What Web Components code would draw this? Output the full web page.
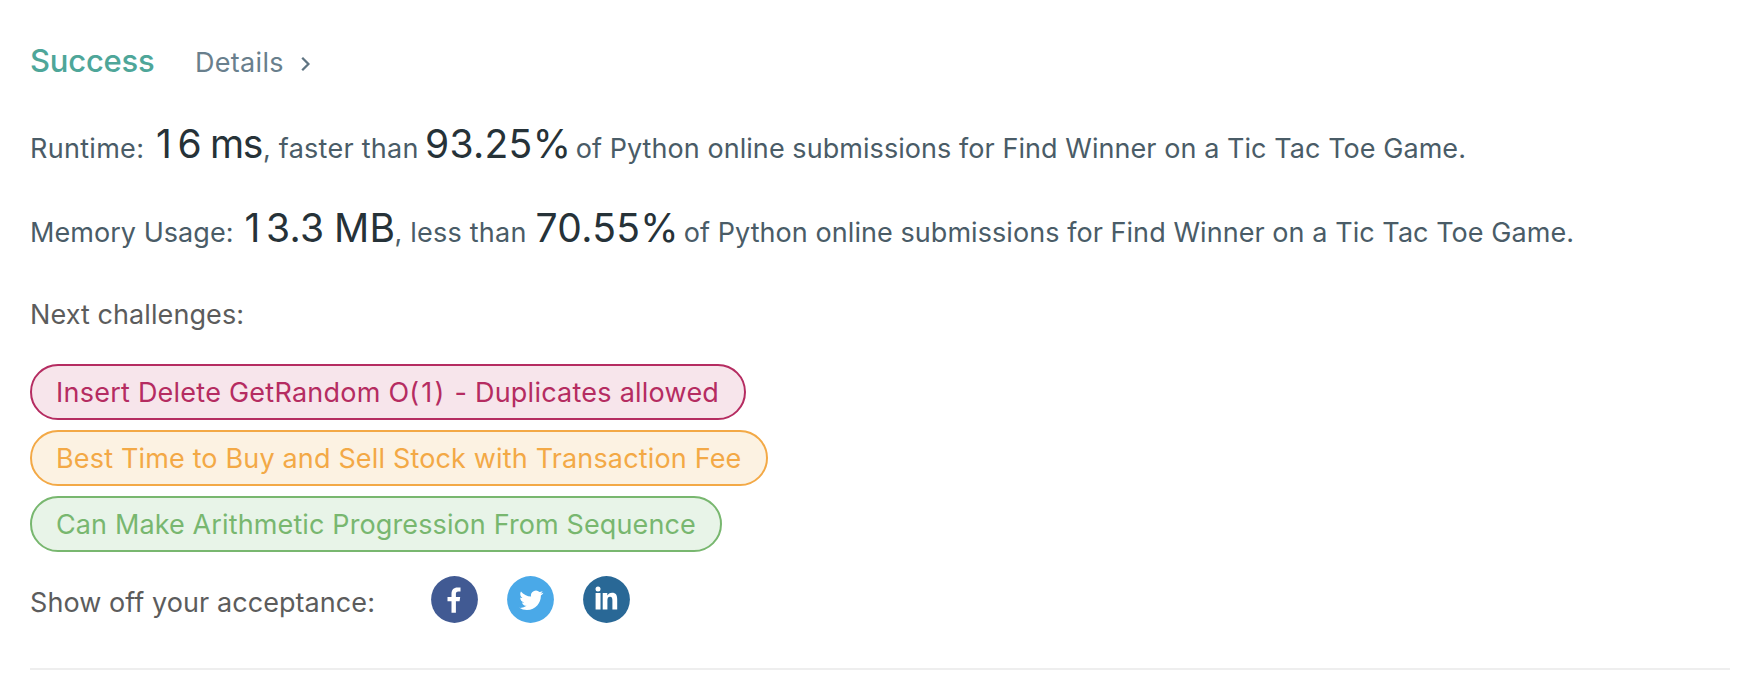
<!DOCTYPE html>
<html lang="en">
<head>
<meta charset="utf-8">
<title>Submission result</title>
<style>
body { margin: 0; background: #fff; font-family: Inter, "Liberation Sans", sans-serif; font-size: 27px; color: #455a64; }
</style>
</head>
<body>
<submission-result></submission-result>
<script>
const define = (name, html) => customElements.define(name, class extends HTMLElement {
  constructor() {
    super();
    const t = document.createElement('template');
    t.innerHTML = html;
    this.attachShadow({ mode: 'open' }).append(t.content.cloneNode(true));
  }
});

define('result-header', `
<style>
  :host { display: flex; align-items: baseline; height: 40px; line-height: 40px; }
  .status { width: 165px; font-size: 31px; font-weight: 500; letter-spacing: -.22px; color: #4ea699; }
  .details { display: flex; align-items: center; color: #697f8d; letter-spacing: .3px; }
  .details span { width: 105px; }
  svg { display: block; position: relative; top: 1px; }
</style>
<div class="status"><slot></slot></div>
<div class="details"><span>Details</span>
<svg width="12" height="18" viewBox="0 0 12 18" fill="none" stroke="#5f7482" stroke-width="2.3"><path d="M2.2 2.8 8.4 9 2.2 15.2"/></svg></div>`);

define('result-stat', `
<style>
  :host { display: flex; align-items: baseline; height: 50px; line-height: 50px; color: #4a5c67; }
</style>
<slot></slot>`);

define('stat-text', `
<style>:host { display: block; flex: none; width: var(--w, auto); white-space: nowrap; letter-spacing: var(--ls, 0); }</style><slot></slot>`);

define('stat-value', `
<style>:host { display: block; flex: none; width: var(--w, auto); white-space: nowrap; font-size: 39px; color: #263238; letter-spacing: var(--ls, 0); word-spacing: var(--ws, 0); }
::slotted(i) { font-style: normal; letter-spacing: 5.5px; }</style><slot></slot>`);

define('challenge-pill', `
<style>
  :host { display: block; box-sizing: border-box; height: 56px; border: 2px solid currentColor; border-radius: 28px; padding: 1px 0 0 24px; line-height: 52px; white-space: nowrap; }
  :host([level=hard]) { width: 716px; color: #b52c61; background: #f7e5eb; letter-spacing: .24px; }
  :host([level=medium]) { width: 738px; color: #f3a946; background: #fcf2e2; letter-spacing: .16px; }
  :host([level=easy]) { width: 692px; color: #78b76f; background: #e8f4e8; letter-spacing: .12px; }
  ::slotted(i) { font-style: normal; letter-spacing: 2.2px; }
</style><slot></slot>`);

define('share-row', `
<style>
  :host { display: flex; align-items: center; height: 56px; color: #5c5c5c; }
  .label { width: 401px; padding-top: 5px; box-sizing: border-box; height: 56px; line-height: 52px; letter-spacing: .07px; }
  .icons { display: flex; gap: 29px; padding-bottom: 1px; }
  svg { display: block; width: 47px; height: 47px; }
</style>
<div class="label"><slot></slot></div>
<div class="icons">
  <svg viewBox="0 0 47 47"><circle cx="23.5" cy="23.5" r="23.4" fill="#415a93"/><path fill="#fff" d="M20.5 36.8V25.3h-4v-4.2h4v-3.3c0-4.2 2.3-6.4 6-6.4 1.2 0 2.4.1 3 .2v3.8h-2.1c-1.9 0-2.5.9-2.5 2.4v3.3h4.3l-.6 4.2h-3.7v11.5z"/></svg>
  <svg viewBox="0 0 47 47"><circle cx="23.5" cy="23.5" r="23.4" fill="#4aa9e8"/><path fill="#fff" transform="translate(12.3 12.3)" d="M23.953 4.57a10 10 0 01-2.825.775 4.958 4.958 0 002.163-2.723c-.951.555-2.005.959-3.127 1.184a4.92 4.92 0 00-8.384 4.482C7.69 8.095 4.067 6.13 1.64 3.162a4.822 4.822 0 00-.666 2.475c0 1.71.87 3.213 2.188 4.096a4.904 4.904 0 01-2.228-.616v.06a4.923 4.923 0 003.946 4.827 4.996 4.996 0 01-2.212.085 4.936 4.936 0 004.604 3.417 9.867 9.867 0 01-6.102 2.105c-.39 0-.779-.023-1.17-.067a13.995 13.995 0 007.557 2.209c9.053 0 13.998-7.496 13.998-13.985 0-.21 0-.42-.015-.63A9.935 9.935 0 0024 4.59z"/></svg>
  <svg viewBox="0 0 47 47"><circle cx="23.5" cy="23.5" r="23.4" fill="#296896"/><g fill="#fff"><circle cx="15" cy="12.9" r="2.5"/><path d="M12.6 17.1h4.9v16.3h-4.9zM19.7 17.1h4.6v2.3c.8-1.5 2.4-2.7 4.7-2.7 4.1 0 5.2 2.7 5.2 6.7v10h-4.8v-8.7c0-2.2-.2-4-2.4-4-2.1 0-2.6 1.7-2.6 3.8v8.9h-4.7z"/></g></svg>
</div>`);

define('submission-result', `
<style>
  :host { display: block; box-sizing: border-box; height: 680px; padding: 41px 10px 0 30px; }
  .first { margin-top: 38px; }
  .second { margin-top: 34px; }
  .next { margin-top: 42px; height: 39px; line-height: 40px; letter-spacing: .08px; color: #5c5c5c; }
  .pills { margin-top: 30px; display: flex; flex-direction: column; align-items: flex-start; gap: 10px; }
  share-row { margin-top: 20px; }
  .rule { margin-top: 40px; height: 2px; background: #eee; }
</style>
<result-header>Success</result-header>
<result-stat class="first"><stat-text style="--w:126px;--ls:.3px">Runtime:</stat-text><stat-value style="--w:107px;--ws:0px;--ls:-1.3px"><i>1</i>6 ms</stat-value><stat-text style="--w:162px;--ls:.25px">, faster than</stat-text><stat-value style="--w:150.7px;--ls:.3px">93.25%</stat-value><stat-text style="--ls:.06px">of Python online submissions for Find Winner on a Tic Tac Toe Game.</stat-text></result-stat>
<result-stat class="second"><stat-text style="--w:214.5px;--ls:.05px">Memory Usage:</stat-text><stat-value style="--w:150px;--ls:.4px;--ws:-2px"><i>1</i>3.3 MB</stat-value><stat-text style="--w:141px;--ls:.22px">, less than</stat-text><stat-value style="--w:148.3px;--ls:.3px">70.55%</stat-value><stat-text style="--ls:.06px">of Python online submissions for Find Winner on a Tic Tac Toe Game.</stat-text></result-stat>
<div class="next">Next challenges:</div>
<div class="pills">
  <challenge-pill level="hard">Insert Delete GetRandom O<i>(1)</i> - Duplicates allowed</challenge-pill>
  <challenge-pill level="medium">Best Time to Buy and Sell Stock with Transaction Fee</challenge-pill>
  <challenge-pill level="easy">Can Make Arithmetic Progression From Sequence</challenge-pill>
</div>
<share-row>Show off your acceptance:</share-row>
<div class="rule"></div>`);
</script>
</body>
</html>
